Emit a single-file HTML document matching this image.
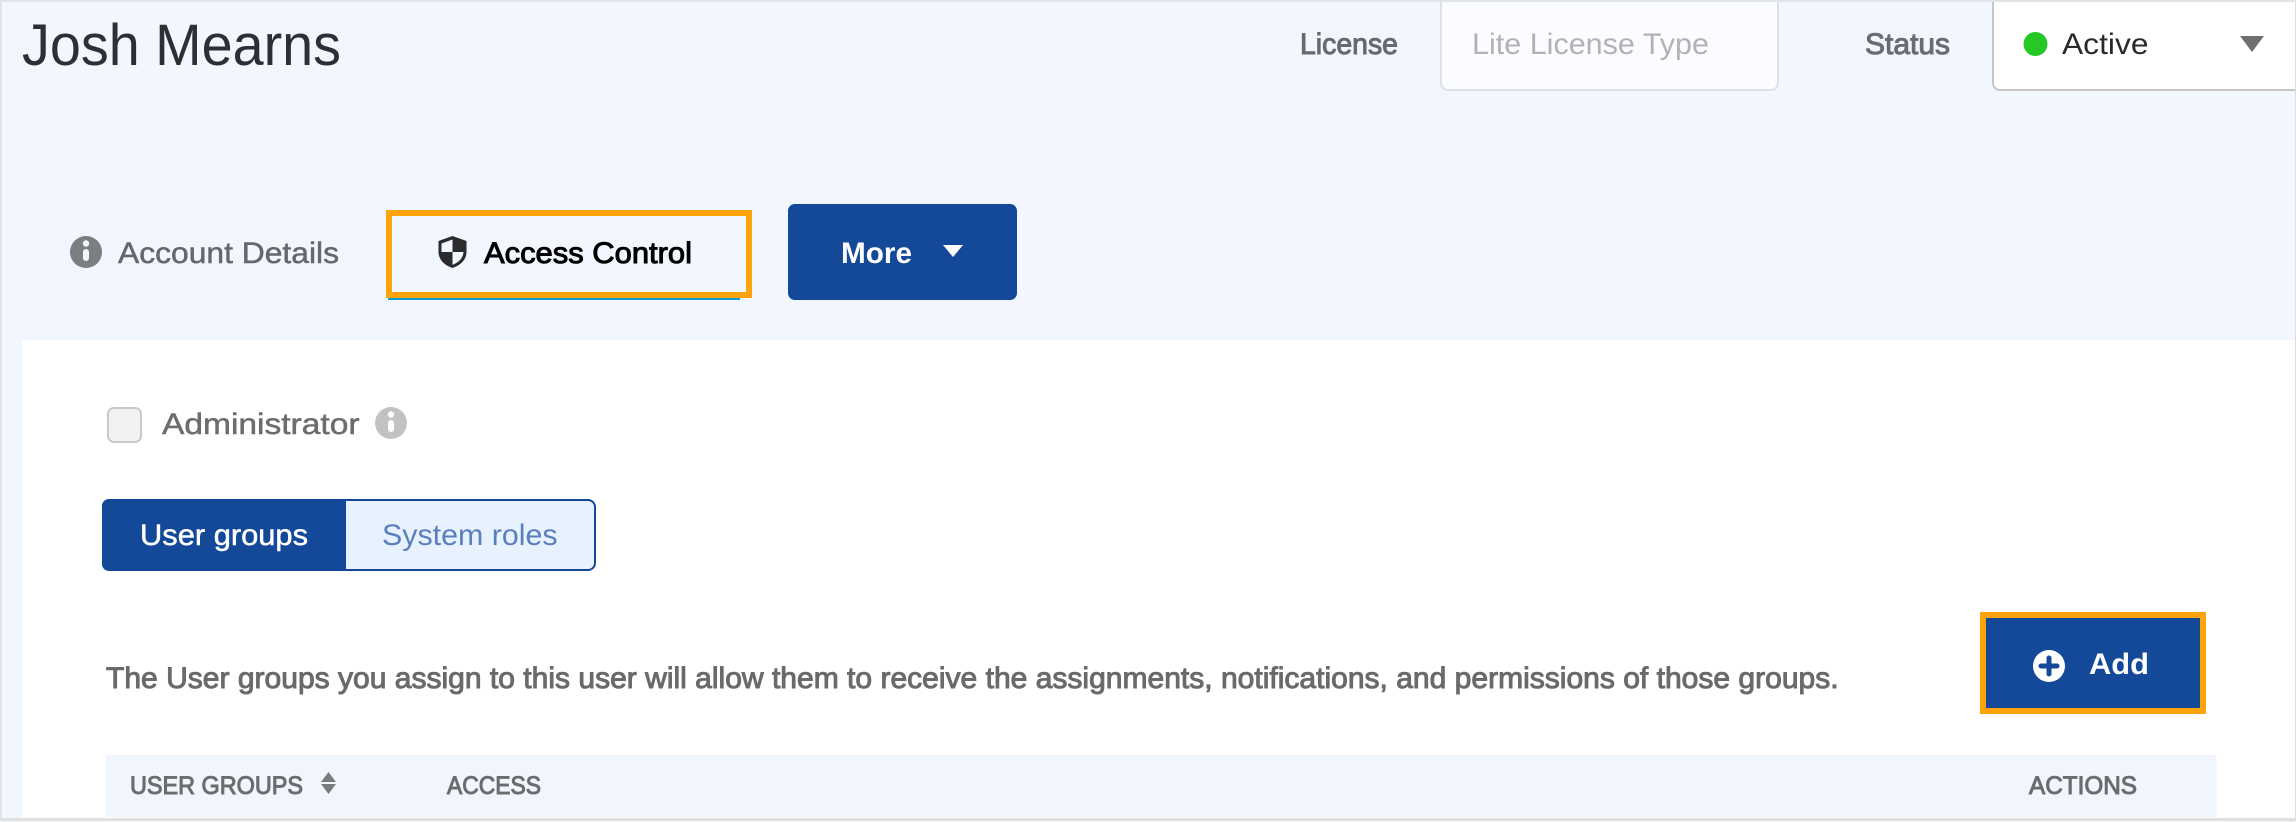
<!DOCTYPE html>
<html lang="en">
<head>
<meta charset="utf-8">
<title>Josh Mearns - Access Control</title>
<style>
html,body{margin:0;padding:0;width:2296px;height:822px;overflow:hidden;background:#fff}
svg{display:block}
text{font-family:"Liberation Sans",Arial,sans-serif;font-size:30px}
.m{stroke-width:1px}
.l{stroke-width:.5px}
</style>
</head>
<body>
<svg xmlns="http://www.w3.org/2000/svg" width="2296" height="822" viewBox="0 0 2296 822">
  <!-- page frame -->
  <rect x="0" y="0" width="2296" height="822" fill="#f2f6fe"/>
  <rect x="0" y="0" width="2" height="822" fill="#e1e4e9"/>
  <rect x="2" y="2" width="1" height="816" fill="#fafbfe"/>
  <rect x="22" y="340" width="2273" height="478" fill="#fff"/>
  <rect x="2295" y="0" width="1" height="822" fill="#dedede"/>
  <rect x="0" y="818" width="2296" height="3" fill="#e0e0e0"/>
  <rect x="0" y="821" width="2296" height="1" fill="#f5f6f8"/>

  <!-- header -->
  <text x="22" y="65" style="font-size:58px" fill="#2d2f33" textLength="319" lengthAdjust="spacingAndGlyphs">Josh Mearns</text>
  <text class="m" x="1300" y="54" fill="#68696d" stroke="#68696d" textLength="98" lengthAdjust="spacingAndGlyphs">License</text>

  <path d="M1441 0V83a7 7 0 0 0 7 7H1771a7 7 0 0 0 7-7V0" fill="#fbfcff" stroke="#dfe1e6" stroke-width="2"/>
  <text x="1472" y="54" fill="#b1b2b7" textLength="237" lengthAdjust="spacingAndGlyphs">Lite License Type</text>

  <text class="m" x="1865" y="54" fill="#6b6c70" stroke="#6b6c70" textLength="85" lengthAdjust="spacingAndGlyphs">Status</text>

  <path d="M1993 0V83a7 7 0 0 0 7 7H2295V0Z" fill="#fff"/>
  <path d="M1993 0V83a7 7 0 0 0 7 7H2295" fill="none" stroke="#c6c6c6" stroke-width="2"/>
  <circle cx="2035.5" cy="44" r="12" fill="#25c825"/>
  <text x="2062" y="54" fill="#2a2a2e" textLength="86.5" lengthAdjust="spacingAndGlyphs">Active</text>
  <path d="M2240 36H2264L2252 52Z" fill="#6f6f6f"/>

  <rect x="0" y="0" width="2296" height="2" fill="#e1e4e9"/>

  <!-- tabs -->
  <circle cx="86" cy="252" r="16" fill="#7d7e82"/>
  <circle cx="86" cy="243.5" r="3.2" fill="#f2f6fe"/>
  <rect x="83" y="249" width="6" height="12" rx="3" fill="#f2f6fe"/>
  <text class="l" x="118" y="263" fill="#66676b" stroke="#66676b" textLength="221" lengthAdjust="spacingAndGlyphs">Account Details</text>

  <rect x="388" y="296" width="352" height="4" fill="#0a9bd8"/>
  <rect x="389" y="213" width="360" height="82" fill="none" stroke="#ffa30c" stroke-width="6"/>

  <path d="M452.5 236 466.5 241V252C466.500 260 460 265.500 452.500 268 445 265.500 438.500 260 438.500 252V241Z" fill="#2b2b2e"/>
  <path d="M452.500 239.500 441.500 243.500V252H452.500Z" fill="#f2f6fe"/>
  <path d="M452.500 252H463.500C463 258.500 458.500 262.500 452.500 264.800Z" fill="#f2f6fe"/>
  <text class="m" x="484" y="263" fill="#000" stroke="#000" textLength="208" lengthAdjust="spacingAndGlyphs">Access Control</text>

  <rect x="788" y="204" width="229" height="96" rx="7" fill="#14499a"/>
  <text x="841" y="263" fill="#fff" font-weight="700" textLength="71" lengthAdjust="spacingAndGlyphs">More</text>
  <path d="M943 245H963L953 257Z" fill="#fff"/>

  <!-- administrator -->
  <rect x="108" y="408" width="33" height="34" rx="6" fill="#f2f2f2" stroke="#c9c9c9" stroke-width="2"/>
  <text class="l" x="162" y="434" fill="#6d6d6f" stroke="#6d6d6f" textLength="197.500" lengthAdjust="spacingAndGlyphs">Administrator</text>
  <circle cx="391" cy="423" r="16" fill="#c2c2c2"/>
  <circle cx="391" cy="414.500" r="3.200" fill="#fff"/>
  <rect x="388" y="420" width="6" height="12" rx="3" fill="#fff"/>

  <!-- toggle -->
  <rect x="103" y="500" width="492" height="70" rx="7" fill="#e8f1fe" stroke="#14499a" stroke-width="2"/>
  <path d="M346 499H109a7 7 0 0 0-7 7V564a7 7 0 0 0 7 7H346Z" fill="#14499a"/>
  <text class="l" x="140" y="545" fill="#fff" stroke="#fff" textLength="168" lengthAdjust="spacingAndGlyphs">User groups</text>
  <text x="382" y="545" fill="#5a7fbd" textLength="175.600" lengthAdjust="spacingAndGlyphs">System roles</text>

  <!-- description -->
  <text class="m" x="106" y="688" fill="#6a6a6c" stroke="#6a6a6c" textLength="1732.600" lengthAdjust="spacingAndGlyphs">The User groups you assign to this user will allow them to receive the assignments, notifications, and permissions of those groups.</text>

  <!-- add button -->
  <rect x="1983" y="615" width="220" height="96" fill="#14499a" stroke="#ffa30c" stroke-width="6"/>
  <circle cx="2049" cy="666" r="16" fill="#fff"/>
  <path d="M2049 658V674M2041 666H2057" stroke="#14499a" stroke-width="5" stroke-linecap="round" fill="none"/>
  <text x="2089" y="674" fill="#fff" font-weight="700" textLength="60" lengthAdjust="spacingAndGlyphs">Add</text>

  <!-- table header -->
  <rect x="106" y="755" width="2110.500" height="62" fill="#f1f5fd"/>
  <text class="m" x="130" y="794" style="font-size:25px" fill="#6c6c6e" stroke="#6c6c6e" textLength="173" lengthAdjust="spacingAndGlyphs">USER GROUPS</text>
  <path d="M328.500 772 336 782H321Z" fill="#7b7b7d"/>
  <path d="M321 784H336L328.500 794Z" fill="#7b7b7d"/>
  <text class="m" x="447" y="794" style="font-size:25px" fill="#6c6c6e" stroke="#6c6c6e" textLength="94" lengthAdjust="spacingAndGlyphs">ACCESS</text>
  <text class="m" x="2029" y="794" style="font-size:25px" fill="#6c6c6e" stroke="#6c6c6e" textLength="108" lengthAdjust="spacingAndGlyphs">ACTIONS</text>
</svg>
</body>
</html>
